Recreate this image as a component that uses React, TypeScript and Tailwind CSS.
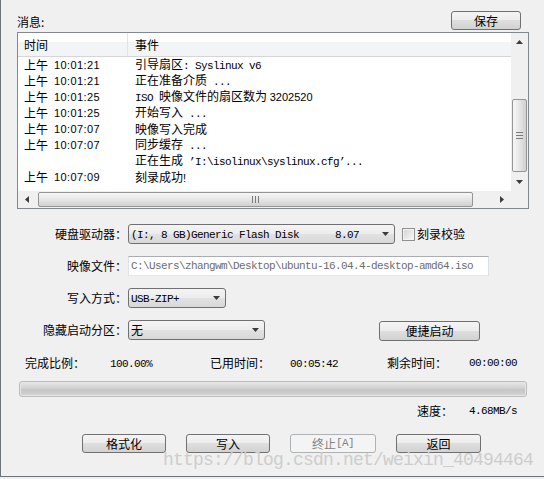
import React from "react";

type Kids = { children?: React.ReactNode };

// latin run drawn like SimSun's half-width glyphs (6px per char)
const M = ({ children }: Kids) => (
  <span className="font-['Liberation_Mono',monospace] text-[11px] tracking-[-0.6px]">
    {children}
  </span>
);

const S = ({ children }: Kids) => (
  <span className="font-['Liberation_Sans',sans-serif] text-[11px]">{children}</span>
);

const Tri = ({ dir }: { dir: "up" | "down" | "left" | "right" }) => {
  const pts: Record<string, string> = {
    up: "0,4 3.5,0 7,4",
    down: "0,0 7,0 3.5,4",
    left: "4,0 4,7 0,3.5",
    right: "0,0 0,7 4,3.5",
  };
  const vertical = dir === "up" || dir === "down";
  return (
    <svg
      width={vertical ? 7 : 4}
      height={vertical ? 4 : 7}
      viewBox={vertical ? "0 0 7 4" : "0 0 4 7"}
    >
      <polygon points={pts[dir]} fill="#3c3c3c" />
    </svg>
  );
};

const Btn = ({
  children,
  className,
  disabled,
}: Kids & { className: string; disabled?: boolean }) => (
  <div
    className={
      disabled
        ? `flex items-center justify-center rounded-[3px] border border-[#adb2b5] bg-[#f4f4f4] text-[#838383] ${className}`
        : `flex items-center justify-center rounded-[3px] border border-[#707070] bg-[linear-gradient(#f4f4f4_0%,#ececec_50%,#dedede_50%,#d2d2d2_100%)] text-black ${className}`
    }
  >
    {children}
  </div>
);

const Combo = ({ children, className }: Kids & { className: string }) => (
  <div
    className={`flex h-[20px] items-center justify-between rounded-[3px] border border-[#707070] bg-[linear-gradient(#f4f4f4_0%,#ececec_50%,#e2e2e2_50%,#d8d8d8_100%)] pl-[2px] pr-[5px] ${className}`}
  >
    <span className="whitespace-pre leading-[18px]">{children}</span>
    <Tri dir="down" />
  </div>
);

const rows: { ap?: string; time?: string; ev: React.ReactNode }[] = [
  { ap: "上午", time: "10:01:21", ev: <>引导扇区<M>: Syslinux v6</M></> },
  { ap: "上午", time: "10:01:21", ev: <>正在准备介质<M> ...</M></> },
  {
    ap: "上午",
    time: "10:01:25",
    ev: (
      <>
        <M>ISO </M>映像文件的扇区数为 <S>3202520</S>
      </>
    ),
  },
  { ap: "上午", time: "10:01:25", ev: <>开始写入<M> ...</M></> },
  { ap: "上午", time: "10:07:07", ev: <>映像写入完成</> },
  { ap: "上午", time: "10:07:07", ev: <>同步缓存<M> ...</M></> },
  { ev: <>正在生成<M> ’I:\isolinux\syslinux.cfg’...</M></> },
  { ap: "上午", time: "10:07:09", ev: <>刻录成功<S>!</S></> },
];

const App = () => {
  return (
    <div className="relative h-[479px] w-[544px] overflow-hidden bg-[#f0f0f0] font-['Noto_Sans_CJK_SC',sans-serif] text-[12px] text-black">
      <div className="flex h-[477px] flex-col border-b border-l border-[#6c737b]">
        {/* message label + save */}
        <div className="mt-[11px] flex h-[19px] items-end justify-between pl-[16px] pr-[23px]">
          <span className="leading-[16px]">消息:</span>
          <Btn className="h-[19px] w-[70px]">保存</Btn>
        </div>

        {/* log list */}
        <div className="ml-[16px] mt-[2px] flex h-[177px] w-[512px] flex-col border border-[#828790] bg-white">
          <div className="flex flex-1">
            <div className="flex flex-1 flex-col">
              <div className="flex h-[24px] items-center border-b border-[#d5d5d5] bg-[linear-gradient(#ffffff_0%,#ffffff_40%,#f3f4f6_40%,#f3f4f6_100%)]">
                <div className="flex h-full w-[110px] items-center border-r border-[#e3e4e6] pl-[6px]">
                  时间
                </div>
                <div className="pl-[7px]">事件</div>
              </div>
              {rows.map((r, i) => (
                <div key={i} className="flex h-[16px] items-center leading-[16px]">
                  <div className="flex w-[111px] items-center pl-[6px]">
                    {r.ap ? (
                      <>
                        <span>{r.ap}</span>
                        <span className="ml-[6px] font-['Liberation_Sans',sans-serif] text-[11px] tracking-[0.4px]">
                          {r.time}
                        </span>
                      </>
                    ) : null}
                  </div>
                  <div className="whitespace-pre pl-[6px]">{r.ev}</div>
                </div>
              ))}
            </div>
            {/* vertical scrollbar */}
            <div className="flex w-[17px] flex-col items-center bg-[#f0f0f0]">
              <div className="flex h-[17px] items-center justify-center">
                <Tri dir="up" />
              </div>
              <div className="h-[49px]" />
              <div className="flex h-[73px] w-[15px] flex-col items-center justify-center gap-[2px] rounded-[2px] border border-[#959595] bg-[linear-gradient(90deg,#f6f6f6,#e6e6e6_50%,#d0d0d0)]">
                <div className="h-[1px] w-[7px] bg-[#7a7a7a]" />
                <div className="h-[1px] w-[7px] bg-[#7a7a7a]" />
                <div className="h-[1px] w-[7px] bg-[#7a7a7a]" />
              </div>
              <div className="flex flex-1 items-center justify-center">
                <Tri dir="down" />
              </div>
            </div>
          </div>
          {/* horizontal scrollbar */}
          <div className="flex h-[17px]">
            <div className="flex flex-1 items-center bg-[#f0f0f0]">
              <div className="flex w-[17px] items-center justify-center">
                <Tri dir="left" />
              </div>
              <div className="ml-[3px] flex h-[15px] w-[435px] items-center justify-center gap-[2px] rounded-[2px] border border-[#959595] bg-[linear-gradient(#f6f6f6,#e6e6e6_50%,#d0d0d0)]">
                <div className="h-[7px] w-[1px] bg-[#7a7a7a]" />
                <div className="h-[7px] w-[1px] bg-[#7a7a7a]" />
                <div className="h-[7px] w-[1px] bg-[#7a7a7a]" />
              </div>
              <div className="flex flex-1 items-center justify-end pr-[7px]">
                <Tri dir="right" />
              </div>
            </div>
            <div className="w-[17px] bg-[#f0f0f0]" />
          </div>
        </div>

        {/* drive */}
        <div className="mt-[15px] flex h-[20px] items-center">
          <div className="mr-[1px] w-[126px] text-right">硬盘驱动器：</div>
          <Combo className="w-[267px]">
            <M>(I:, 8 GB)Generic Flash Disk      8.07</M>
          </Combo>
          <div className="ml-[7px] flex h-[13px] w-[13px] items-center justify-center border border-[#8e8f8f] bg-[#f4f4f4]">
            <div className="h-[9px] w-[9px] bg-[linear-gradient(135deg,#d6d6d6,#f6f6f6)]" />
          </div>
          <span className="ml-[2px]">刻录校验</span>
        </div>

        {/* image file */}
        <div className="mt-[12px] flex h-[20px] items-center">
          <div className="mr-[1px] w-[126px] text-right">映像文件：</div>
          <div className="flex h-[20px] w-[361px] items-center border border-[#abadb3] border-l-[#e2e3ea] border-r-[#dbdfe6] border-b-[#e3e9ef] bg-white pl-[2px] text-[#6d6d6d]">
            <M>C:\Users\zhangwm\Desktop\ubuntu-16.04.4-desktop-amd64.iso</M>
          </div>
        </div>

        {/* write mode */}
        <div className="mt-[12px] flex h-[20px] items-center">
          <div className="mr-[1px] w-[126px] text-right">写入方式：</div>
          <Combo className="w-[98px]">
            <M>USB-ZIP+</M>
          </Combo>
        </div>

        {/* hidden partition */}
        <div className="mt-[12px] flex h-[20px] items-center">
          <div className="mr-[1px] w-[126px] text-right">隐藏启动分区：</div>
          <Combo className="w-[137px]">无</Combo>
          <Btn className="ml-[114px] mt-[2px] h-[20px] w-[101px]">便捷启动</Btn>
        </div>

        {/* progress stats */}
        <div className="mt-[15px] flex h-[16px] items-center pl-[24px]">
          <span className="w-[85px]">完成比例：</span>
          <span className="w-[100px]">
            <M>100.00%</M>
          </span>
          <span className="w-[80px]">已用时间：</span>
          <span className="w-[97px]">
            <M>00:05:42</M>
          </span>
          <span className="w-[82px]">剩余时间：</span>
          <M>00:00:00</M>
        </div>

        <div className="ml-[18px] mt-[10px] h-[16px] w-[508px] rounded-[3px] border border-[#bcbcbc] bg-[#e6e6e6] p-[1px]">
          <div className="h-full w-full rounded-[1px] bg-[linear-gradient(#e4e4e4,#d0d0d0_45%,#c6c6c6_55%,#d2d2d2)]" />
        </div>

        <div className="mt-[6px] flex h-[16px] items-center pl-[416px]">
          <span className="w-[52px]">速度：</span>
          <M>4.68MB/s</M>
        </div>

        {/* action buttons */}
        <div className="mt-[15px] flex gap-[20px] pl-[81px]">
          <Btn className="h-[19px] w-[84px]">格式化</Btn>
          <Btn className="h-[19px] w-[84px]">写入</Btn>
          <Btn className="h-[19px] w-[86px]" disabled>
            终止<M>[A]</M>
          </Btn>
          <Btn className="h-[19px] w-[85px]">返回</Btn>
        </div>
      </div>

      {/* blog watermark over the window */}
      <div className="absolute left-[163px] top-[449px] whitespace-pre font-['Liberation_Mono',monospace] text-[18px] leading-[22px] tracking-[-0.8px] text-[#cdcdcd]">
        https://blog.csdn.net/weixin_40494464
      </div>
    </div>
  );
};

export default App;
